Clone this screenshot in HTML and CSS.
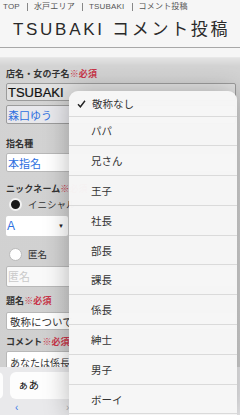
FILE: index.html
```html
<!DOCTYPE html>
<html lang="ja">
<head>
    <meta charset="utf-8">
    <title>TSUBAKI コメント投稿</title>
    <meta name="viewport" content="width=device-width, initial-scale=1">
    <link rel="stylesheet" href="styles.css">
</head>

<body>
    <div id="page">
        <div class="breadcrumb">
            <a>TOP</a><span class="sep"></span><a>水戸エリア</a><span class="sep"></span><a>TSUBAKI</a><span class="sep"></span><span>コメント投稿</span>
        </div>
        <h1 class="title">TSUBAKI コメント投稿</h1>

        <form class="commentform">
            <div class="label first">店名・女の子名<span class="req">※必須</span></div>
            <input class="field locked shop" type="text" value="TSUBAKI" readonly>
            <input class="field locked blue girl" type="text" value="森口ゆう" readonly>

            <div class="label shimei">指名種</div>
            <input class="field blue" type="text" value="本指名" readonly>

            <div class="label nick">ニックネーム<span class="req">※必須</span></div>
            <div class="radiorow initial"><span class="radio checked"></span>イニシャル</div>
            <div class="select"><span>A</span><span class="arrow">▼</span></div>
            <div class="radiorow anon"><span class="radio"></span>匿名</div>
            <input class="field anonname" type="text" placeholder="匿名">

            <div class="label subject">題名<span class="req">※必須</span></div>
            <input class="field plain subj" type="text" value="敬称について">

            <div class="label comment">コメント<span class="req">※必須</span></div>
            <div class="field plain textarea">あなたは係長</div>
        </form>

        <div class="keyboardbar">
            <div class="key edge"></div>
            <div class="key">ぁあ</div>
            <div class="bottomnav"><span class="back">‹</span><span class="fwd">›</span></div>
        </div>

        <ul class="picker">
            <li class="selected"><svg class="check" width="9" height="8" viewBox="0 0 9 8"><polyline points="1,4.2 3.4,6.8 8,0.8" fill="none" stroke="#222" stroke-width="1.4"/></svg>敬称なし</li>
            <li>パパ</li>
            <li>兄さん</li>
            <li>王子</li>
            <li>社長</li>
            <li>部長</li>
            <li>課長</li>
            <li>係長</li>
            <li>紳士</li>
            <li>男子</li>
            <li>ボーイ</li>
        </ul>
    </div>
</body>

</html>
```

FILE: styles.css
```css
html,
body {
    margin: 0;
    background-color: #f6f6f6;
}

* {
    font-family: 'Liberation Sans', 'Noto Sans CJK JP', sans-serif;
}

#page {
    position: relative;
    height: 100vh;
    overflow: hidden;
}

.breadcrumb {
    height: 14px;
    line-height: 14px;
    padding-left: 3px;
    font-size: 8px;
    letter-spacing: 0.2px;
    color: #555;
    display: flex;
    align-items: center;
}

.sep {
    width: 1px;
    height: 8px;
    background-color: #888;
    margin: 0 6px 0 7px;
}

.title {
    margin: 0;
    height: 33px;
    line-height: 32px;
    padding-left: 13px;
    font-size: 17px;
    font-weight: normal;
    letter-spacing: 2.7px;
    color: #2a2a2a;
    border-bottom: 1px solid #a8a8a8;
}

.commentform {
    margin-top: 9px;
    padding: 9px 4px 0 6px;
    height: 400px;
    background: linear-gradient(#e3e3e3, #d3d3d3 8px, #cfcfcf);
    border-top: 1px solid #e8e8e8;
}

.label {
    height: 14px;
    line-height: 14px;
    font-size: 9px;
    font-weight: bold;
    color: #333;
    letter-spacing: 0.1px;
}

.req {
    color: #c8364a;
}

.field {
    display: block;
    width: 100%;
    box-sizing: border-box;
    height: 19px;
    margin: 0;
    padding: 0 0 0 1px;
    border: 1px solid #b8b8b8;
    border-radius: 2px;
    background-color: #fff;
    font-size: 10.5px;
    color: #333;
    outline: none;
}

.locked {
    background-color: #e2e2e2;
    border-color: #9c9c9c;
}

.shop {
    margin-top: 2px;
    height: 18px;
    font-size: 13px;
    color: #111;
    -webkit-text-stroke: 0.2px #111;
}

.blue {
    color: #2d6fe0;
    font-size: 11px;
    margin-top: 2px;
}

.girl {
    margin-top: 4px;
    background-color: #e8e8ec;
}

.shimei {
    margin-top: 13px;
}

.nick {
    margin-top: 10px;
}

.radiorow {
    height: 14px;
    display: flex;
    align-items: center;
    font-size: 9.5px;
    color: #333;
}

.initial {
    margin-top: 1px;
}

.anon {
    margin-top: 11px;
}

.radio {
    width: 13px;
    height: 13px;
    box-sizing: border-box;
    border-radius: 50%;
    border: 1px solid #bbb;
    background-color: #fff;
    margin: 0 6px 0 3px;
}

.radio.checked {
    background-color: #1a1a1a;
    border: 2px solid #f2f2f2;
}

.select {
    margin-top: 5px;
    width: 62px;
    height: 20px;
    box-sizing: border-box;
    padding: 0 4px 0 1px;
    display: flex;
    align-items: center;
    justify-content: space-between;
    background-color: #fff;
    border-radius: 2px;
    font-size: 12px;
    color: #2d6fe0;
}

.arrow {
    font-size: 6px;
    color: #222;
}

.anonname {
    margin-top: 5px;
    height: 21px;
    font-size: 11px;
    background-color: #f9f9f9;
}

.anonname::placeholder {
    color: #c9c9c9;
}

.subject {
    margin-top: 7px;
}

.subj {
    margin-top: 4px;
    height: 18px;
    padding-left: 3px;
}

.comment {
    margin-top: 5px;
}

.textarea {
    margin-top: 2px;
    height: 30px;
    padding: 3px 0 0 3px;
    font-size: 10px;
}

.keyboardbar {
    position: absolute;
    left: 0;
    right: 0;
    top: 367px;
    bottom: 0;
    background-color: #e9e9eb;
    display: flex;
    gap: 7px;
    padding-top: 5px;
    box-sizing: border-box;
}

.key {
    width: 80px;
    height: 27px;
    line-height: 27px;
    padding-left: 8px;
    box-sizing: border-box;
    background-color: #fdfdfd;
    border-radius: 6px;
    font-size: 10.5px;
    color: #111;
}

.key.edge {
    width: 10px;
    margin-left: -7px;
}

.bottomnav {
    position: absolute;
    left: 0;
    right: 0;
    bottom: 0;
    height: 13px;
    line-height: 12px;
    font-size: 10px;
}

.back {
    position: absolute;
    left: 15px;
    color: #3a78e8;
}

.fwd {
    position: absolute;
    left: 66px;
    color: #aaa;
}

.picker {
    position: absolute;
    left: 69px;
    top: 91px;
    width: 168px;
    bottom: 0;
    margin: 0;
    padding: 0;
    list-style: none;
    background-color: rgba(246, 246, 246, 0.98);
    border-radius: 9px 9px 0 0;
    box-shadow: 0 0 26px rgba(0, 0, 0, 0.28);
    overflow: hidden;
}

.picker li {
    height: 29.8px;
    box-sizing: border-box;
    padding-left: 22px;
    display: flex;
    align-items: center;
    border-bottom: 1px solid #dadada;
    font-size: 10.5px;
    color: #333;
    font-family: 'Noto Sans CJK JP', sans-serif;
}

.picker li.selected {
    height: 25.5px;
    padding-top: 1px;
    padding-left: 8px;
}

.check {
    margin-right: 6px;
}
```
